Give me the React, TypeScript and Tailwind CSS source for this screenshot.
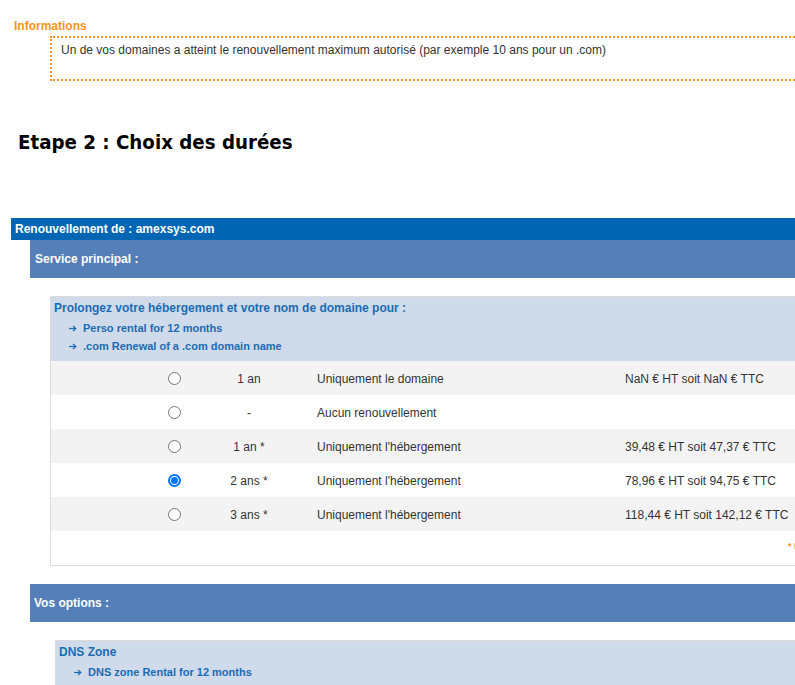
import React from "react";

const rows = [
  { checked: false, dur: "1 an", desc: "Uniquement le domaine", price: "NaN € HT soit NaN € TTC", alt: true },
  { checked: false, dur: "-", desc: "Aucun renouvellement", price: "", alt: false },
  { checked: false, dur: "1 an *", desc: "Uniquement l'hébergement", price: "39,48 € HT soit 47,37 € TTC", alt: true },
  { checked: true, dur: "2 ans *", desc: "Uniquement l'hébergement", price: "78,96 € HT soit 94,75 € TTC", alt: false },
  { checked: false, dur: "3 ans *", desc: "Uniquement l'hébergement", price: "118,44 € HT soit 142,12 € TTC", alt: true },
];

function Radio({ checked }: { checked: boolean }) {
  return checked ? (
    <span className="flex h-[13px] w-[13px] items-center justify-center rounded-full border-2 border-[#0075ff] bg-white">
      <span className="h-[7px] w-[7px] rounded-full bg-[#0075ff]" />
    </span>
  ) : (
    <span className="block h-[13px] w-[13px] rounded-full border border-[#767676] bg-white" />
  );
}

function Arrow() {
  return (
    <span className="flex w-[14px] items-center">
      <svg width="8" height="7" viewBox="0 0 8 7">
        <path d="M0 3.5H6.5" stroke="currentColor" strokeWidth="1.2" />
        <path d="M4 1L6.8 3.5L4 6" stroke="currentColor" strokeWidth="1.2" fill="none" />
      </svg>
    </span>
  );
}

export default function App() {
  return (
    <div className="w-[795px] h-[685px] overflow-hidden bg-white font-['Liberation_Sans',Arial,sans-serif] text-[12px] text-[#333]">
      <div className="w-[830px]">
        {/* Informations */}
        <div className="pt-[19px] pl-[14px] text-[12px] font-bold leading-[14px] text-[#f7941d]">Informations</div>
        <div className="ml-[50px] mt-[3px] h-[45px] border-2 border-dotted border-[#f7941d] pl-[9px] pt-[5px] leading-[14px] text-[#333]">
          Un de vos domaines a atteint le renouvellement maximum autorisé (par exemple 10 ans pour un .com)
        </div>

        {/* Heading */}
        <h1 className="mt-[48px] pl-[18px] font-['DejaVu_Sans_Condensed','DejaVu_Sans',sans-serif] text-[20.3px] font-bold leading-[26px] text-black">
          Etape 2 : Choix des durées
        </h1>

        {/* Renouvellement bar */}
        <div className="mt-[63px] ml-[11px] flex h-[22px] items-center bg-[#0066b3] pl-[4px] font-bold text-white">
          Renouvellement de : amexsys.com
        </div>
        <div className="ml-[30px] flex h-[38px] items-center bg-[#557fb8] pl-[5px] font-bold text-white">
          Service principal :
        </div>

        {/* Main box */}
        <div className="ml-[50px] mt-[18px] border-l border-b border-[#dcdcdc]">
          <div className="h-[65px] border-t border-[#dcdcdc] bg-[#cfdaea] pl-[3px] pt-[3px] text-[#1c6cb3]">
            <div className="font-bold leading-[16px]">Prolongez votre hébergement et votre nom de domaine pour :</div>
            <div className="pl-[15px] pt-[3px] text-[11px] font-bold leading-[18px]">
              <div className="flex items-center"><Arrow />Perso rental for 12 months</div>
              <div className="flex items-center"><Arrow />.com Renewal of a .com domain name</div>
            </div>
          </div>
          {rows.map((r, i) => (
            <div key={i} className={`flex h-[34px] items-center pt-[1px] ${r.alt ? "bg-[#f3f3f3]" : "bg-white"}`}>
              <div className="w-[117px] shrink-0" />
              <div className="w-[13px] shrink-0"><Radio checked={r.checked} /></div>
              <div className="w-[136px] shrink-0 text-center">{r.dur}</div>
              <div className="w-[308px] shrink-0">{r.desc}</div>
              <div className="shrink-0 whitespace-nowrap">{r.price}</div>
            </div>
          ))}
          <div className="h-[34px] whitespace-nowrap bg-white pl-[737px] pt-[9px] text-[9px] font-bold text-[#f7941d]">* Incluant</div>
        </div>

        {/* Vos options */}
        <div className="ml-[30px] mt-[18px] flex h-[38px] items-center bg-[#557fb8] pl-[4px] font-bold text-white">
          Vos options :
        </div>
        <div className="ml-[55px] mt-[18px] h-[60px] border-t border-l border-[#dcdcdc] bg-[#cfdaea] pl-[3px] pt-[3px] text-[#1c6cb3]">
          <div className="font-bold leading-[16px]">DNS Zone</div>
          <div className="pl-[15px] pt-[3px] text-[11px] font-bold leading-[18px]">
            <div className="flex items-center"><Arrow />DNS zone Rental for 12 months</div>
          </div>
        </div>
      </div>
    </div>
  );
}
